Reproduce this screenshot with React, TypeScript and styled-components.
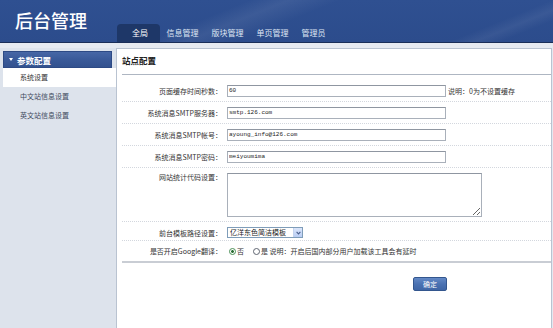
import React from "react";
import styled, { createGlobalStyle } from "styled-components";

const GlobalStyle = createGlobalStyle`
  html, body { margin: 0; padding: 0; }
  body {
    width: 553px;
    height: 328px;
    overflow: hidden;
    background: #e4e9f0;
    font-family: "Noto Sans CJK SC", "Noto Sans", sans-serif;
    color: #333;
  }
  * { box-sizing: border-box; }
`;

const Page = styled.div`
  width: 553px;
  height: 328px;
  display: flex;
  flex-direction: column;
  background: #e4e9f0;
`;

const Header = styled.header`
  flex: none;
  height: 43px;
  display: flex;
  align-items: flex-end;
  padding-left: 15px;
  border-bottom: 1px solid #1a2e58;
  background:
    linear-gradient(158deg, rgba(255,255,255,0) 0%, rgba(255,255,255,0) 38%, rgba(255,255,255,0.07) 44%, rgba(255,255,255,0) 52%, rgba(255,255,255,0) 84%, rgba(255,255,255,0.06) 88%, rgba(255,255,255,0) 92%),
    linear-gradient(180deg, #2f5091 0%, #2c4c8c 100%);
`;

const Title = styled.h1`
  align-self: flex-start;
  margin: 11px 0 0 0;
  font-size: 18px;
  line-height: 18px;
  font-weight: 500;
  color: #fff;
  letter-spacing: 0;
`;

const Tabs = styled.nav`
  display: flex;
  align-items: flex-end;
  margin-left: 30px;
`;

const Tab = styled.div<{ $active?: boolean }>`
  height: 18px;
  line-height: 18px;
  font-size: 8px;
  color: ${(p) => (p.$active ? "#ffffff" : "#dfe6f3")};
  padding: ${(p) => (p.$active ? "0 12px 0 15px" : "0 6.5px")};
  background: ${(p) => (p.$active ? "#1e3768" : "transparent")};
  border-radius: 4px 4px 0 0;
  white-space: nowrap;
`;

const Strip = styled.div`
  flex: none;
  height: 5px;
  background: #e6eaf1;
`;

const Body = styled.div`
  flex: 1;
  display: flex;
  min-height: 0;
`;

const Sidebar = styled.aside`
  flex: none;
  width: 116px;
  background: #dde3ec;
  padding: 3px 0 0 3px;
`;

const SideHeader = styled.div`
  height: 17px;
  margin-right: 4px;
  display: flex;
  align-items: center;
  padding-left: 5px;
  gap: 4px;
  color: #fff;
  font-weight: 700;
  font-size: 8.5px;
  background: linear-gradient(180deg, #4767a6 0%, #3a5a99 50%, #33528f 100%);
  border: 1px solid #2d4a85;
`;

const Caret = styled.span`
  width: 0;
  height: 0;
  border-left: 2.5px solid transparent;
  border-right: 2.5px solid transparent;
  border-top: 3px solid #fff;
`;

const SideItem = styled.div<{ $active?: boolean }>`
  height: 19px;
  line-height: 19px;
  padding-left: 17px;
  font-size: 7px;
  color: ${(p) => (p.$active ? "#333" : "#3f4b5e")};
  background: ${(p) => (p.$active ? "#ffffff" : "transparent")};
  white-space: nowrap;
`;

const Main = styled.main`
  flex: 1;
  background: #fff;
  border: 1px solid #b9c3d1;
  border-bottom: none;
  margin-right: 1px;
`;

const PanelTitle = styled.div`
  margin-left: 5px;
  height: 26px;
  line-height: 23px;
  font-size: 8.5px;
  font-weight: 700;
  color: #222;
  border-bottom: 1px solid #aeb6c2;
`;

const Form = styled.div`
  margin-left: 5px;
  padding-top: 5px;
`;

const Row = styled.div<{ $top?: boolean; $solid?: boolean }>`
  display: flex;
  align-items: ${(p) => (p.$top ? "flex-start" : "center")};
  min-height: 22px;
  border-bottom: ${(p) => (p.$solid ? "2px solid #c9cdd4" : "1px dotted #d3d7de")};
`;

const TextRow = styled(Row)`
  padding: 5px 0 4px;
`;

const SelectRow = styled(Row)`
  min-height: 19px;
  padding-top: 3px;
`;

const Label = styled.div`
  flex: none;
  width: 100px;
  text-align: right;
  font-size: 7px;
  line-height: 8px;
  color: #333;
  white-space: nowrap;
`;

const Control = styled.div`
  display: flex;
  align-items: center;
  margin-left: 5px;
`;

const TextInput = styled.input`
  width: 219px;
  height: 12px;
  margin: 0;
  padding: 0 1px;
  border: 1px solid #a9b0ba;
  border-top-color: #8f96a1;
  font-family: "Liberation Mono", "DejaVu Sans Mono", monospace;
  font-size: 6px;
  color: #222;
  background: #fff;
  outline: none;
`;

const Hint = styled.span`
  margin-left: 2px;
  font-size: 7px;
  color: #333;
  white-space: nowrap;
`;

const TextArea = styled.textarea`
  width: 255px;
  height: 44px;
  margin: 0;
  padding: 1px;
  border: 1px solid #a9b0ba;
  border-top-color: #8f96a1;
  font-size: 7px;
  background: #fff;
  outline: none;
`;

const SelectBox = styled.div`
  width: 76px;
  height: 11px;
  display: flex;
  align-items: stretch;
  border: 1px solid #7f9db9;
  background: #fff;
`;

const SelectText = styled.span`
  flex: 1;
  font-size: 7px;
  line-height: 9px;
  padding-left: 2px;
  color: #222;
  white-space: nowrap;
  overflow: hidden;
`;

const SelectArrow = styled.span`
  flex: none;
  width: 9px;
  display: flex;
  align-items: center;
  justify-content: center;
  background: linear-gradient(180deg, #dbe6fb 0%, #b9cdf3 100%);
  border-left: 1px solid #c3d3ef;
`;

const Radio = styled.input`
  appearance: none;
  -webkit-appearance: none;
  width: 7px;
  height: 7px;
  margin: 1px 0 0 0;
  border-radius: 50%;
  border: 1px solid ${(p) => (p.checked ? "#4b8f56" : "#5e6470")};
  background: ${(p) =>
    p.checked ? "radial-gradient(circle, #2c6e35 0 1.2px, #fff 1.6px)" : "#fff"};
  flex: none;
`;

const RadioText = styled.span`
  font-size: 7px;
  color: #333;
  white-space: nowrap;
  margin-left: 1px;
`;

const RadioGroup = styled.div`
  display: flex;
  align-items: center;
  margin-left: 2px;
`;

const RadioSpacer = styled.span`
  width: 9px;
`;

const ButtonRow = styled.div`
  padding: 5px 0 0 291px;
`;

const SubmitButton = styled.button`
  width: 34px;
  height: 14px;
  padding: 0;
  font-family: inherit;
  font-size: 7px;
  color: #fff;
  border: 1px solid #33568e;
  border-radius: 2px;
  background: linear-gradient(180deg, #6389c6 0%, #4b72b2 50%, #3f66a6 100%);
  cursor: pointer;
`;

const textFields = [
  { label: "页面缓存时间秒数：", value: "60", hint: "说明：0为不设置缓存" },
  { label: "系统消息SMTP服务器：", value: "smtp.126.com" },
  { label: "系统消息SMTP帐号：", value: "ayoung_info@126.com" },
  { label: "系统消息SMTP密码：", value: "meiyoumima" },
];

export default function App() {
  return (
    <>
      <GlobalStyle />
      <Page>
        <Header>
          <Title>后台管理</Title>
          <Tabs>
            <Tab $active>全局</Tab>
            <Tab>信息管理</Tab>
            <Tab>版块管理</Tab>
            <Tab>单页管理</Tab>
            <Tab>管理员</Tab>
          </Tabs>
        </Header>
        <Strip />
        <Body>
          <Sidebar>
            <SideHeader>
              <Caret />
              参数配置
            </SideHeader>
            <SideItem $active>系统设置</SideItem>
            <SideItem>中文站信息设置</SideItem>
            <SideItem>英文站信息设置</SideItem>
          </Sidebar>
          <Main>
            <PanelTitle>站点配置</PanelTitle>
            <Form>
              {textFields.map((f) => (
                <Row key={f.label}>
                  <Label>{f.label}</Label>
                  <Control>
                    <TextInput readOnly value={f.value} />
                    {f.hint && <Hint>{f.hint}</Hint>}
                  </Control>
                </Row>
              ))}
              <TextRow $top>
                <Label>网站统计代码设置：</Label>
                <Control>
                  <TextArea readOnly defaultValue="" />
                </Control>
              </TextRow>
              <SelectRow>
                <Label>前台模板路径设置：</Label>
                <Control>
                  <SelectBox>
                    <SelectText>亿洋东色简洁模板</SelectText>
                    <SelectArrow>
                      <svg width="5" height="4" viewBox="0 0 5 4">
                        <path d="M0.6 0.8 L2.5 2.9 L4.4 0.8" fill="none" stroke="#4a5f8c" strokeWidth="1.1" />
                      </svg>
                    </SelectArrow>
                  </SelectBox>
                </Control>
              </SelectRow>
              <Row $solid>
                <Label>是否开启Google翻译：</Label>
                <Control>
                  <RadioGroup>
                    <Radio type="radio" name="google" checked readOnly />
                    <RadioText>否</RadioText>
                    <RadioSpacer />
                    <Radio type="radio" name="google" readOnly />
                    <RadioText>是 说明：开启后国内部分用户加载该工具会有延时</RadioText>
                  </RadioGroup>
                </Control>
              </Row>
              <ButtonRow>
                <SubmitButton type="button">确定</SubmitButton>
              </ButtonRow>
            </Form>
          </Main>
        </Body>
      </Page>
    </>
  );
}
